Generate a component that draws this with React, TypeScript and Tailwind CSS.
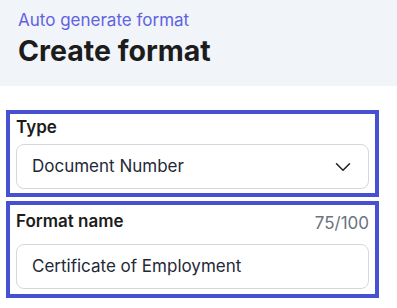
import React from 'react'
import { ChevronDown } from 'lucide-react'

const App: React.FC = () => {
  return (
    <div className="w-[397px] h-[308px] bg-white font-['Inter',sans-serif] overflow-hidden">
      {/* Header */}
      <div className="h-[86px] bg-[#f1f4f9] px-[18px] pt-[8px]">
        <div className="text-[17px] leading-[24px] text-[#5f63e0]">Auto generate format</div>
        <h1 className="mt-[2px] text-[28.5px] leading-[34px] font-bold text-[#1c1c1c]">Create format</h1>
      </div>

      <div className="px-[6px] pt-[24px] w-[385px]">
        {/* Type */}
        <div className="border-4 border-[#4551d1] px-[6px] pt-[1px] pb-[4px]">
          <label className="block text-[17px] leading-[24px] font-semibold text-[#1c1c1c]">Type</label>
          <div className="mt-[5px] h-[45px] rounded-lg border border-[#d4d7dd] flex items-center justify-between pl-[15px] pr-[12px]">
            <span className="text-[17px] text-[#1f2937]">Document Number</span>
            <ChevronDown size={26} strokeWidth={1.4} className="text-[#222]" />
          </div>
        </div>

        {/* Format name */}
        <div className="mt-[4px] border-4 border-[#4551d1] px-[6px] pt-[4px] pb-[5px]">
          <div className="flex items-start justify-between">
            <label className="text-[17px] leading-[24px] font-semibold text-[#1c1c1c]">Format name</label>
            <span className="pt-[2px] text-[17px] leading-[24px] text-[#6b7280]">75/100</span>
          </div>
          <div className="mt-[9px] h-[45px] rounded-lg border border-[#d4d7dd] flex items-center pl-[15px]">
            <span className="text-[17px] text-[#1f2937]">Certificate of Employment</span>
          </div>
        </div>
      </div>
    </div>
  )
}

export default App
